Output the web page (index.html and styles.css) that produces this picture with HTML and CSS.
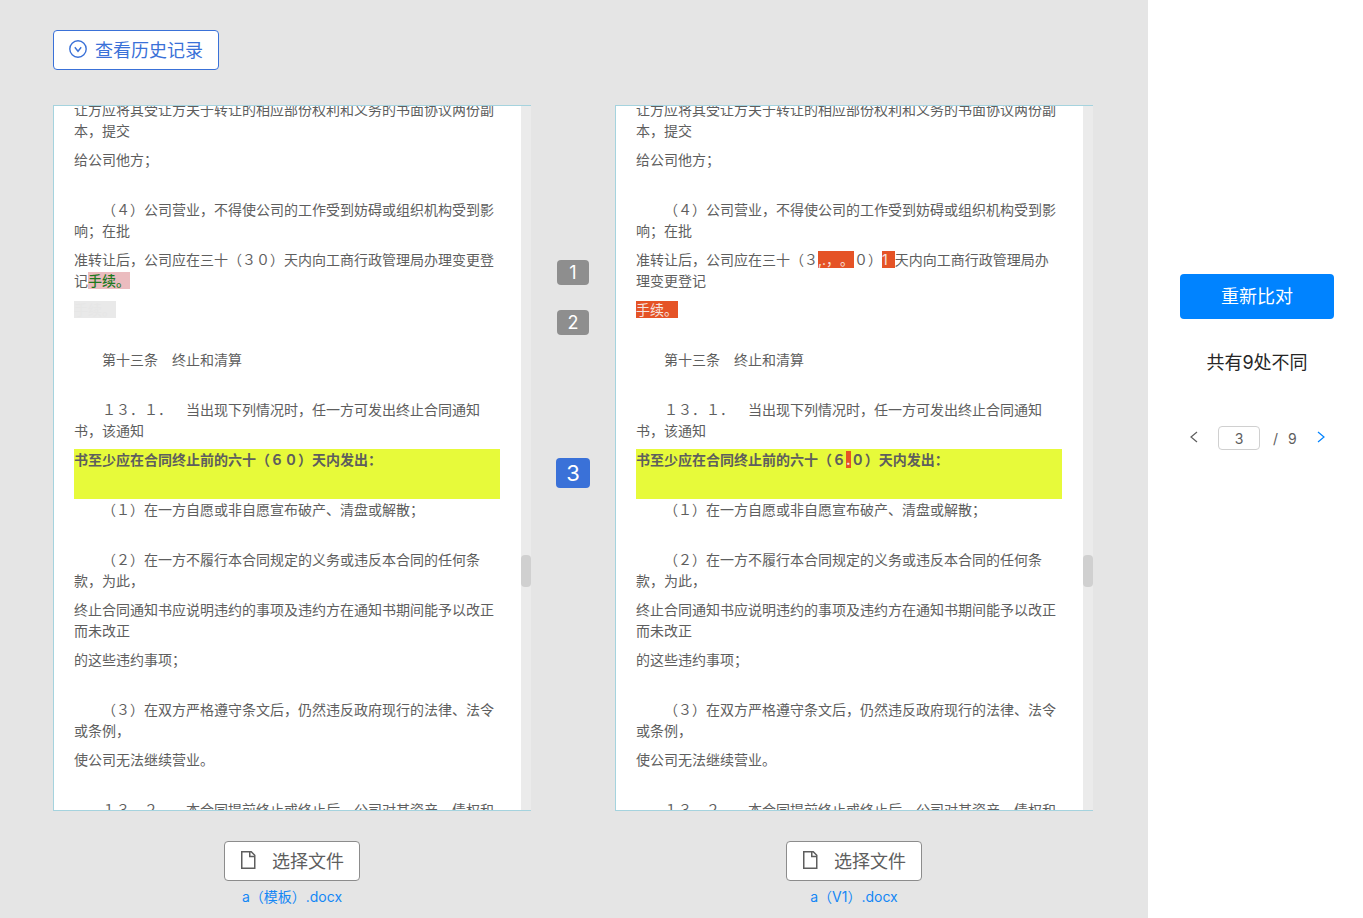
FILE: index.html
```html
<!DOCTYPE html>
<html lang="zh-CN">
<head>
    <meta charset="UTF-8">
    <meta name="viewport" content="width=device-width, initial-scale=1.0">
    <title>合同比对</title>
    <link rel="stylesheet" href="styles.css">
</head>
<body>
    <div class="page">
        <main class="compare">
            <button type="button" class="btn history-btn">
                <svg width="18" height="18" viewBox="0 0 18 18" fill="none" stroke="currentColor" stroke-width="1.4">
                    <circle cx="9" cy="9" r="8.2"/>
                    <path d="M5.8 7.3 9 11.3l3.2-4"/>
                </svg>
                <span>查看历史记录</span>
            </button>

            <div class="panels">
                <section class="panel">
                    <div class="doc">
                        <p>让方应将其受让方关于转让的相应部份权利和义务的书面协议两份副本，提交</p>
                        <p>给公司他方；</p>
                        <p>　　（４）公司营业，不得使公司的工作受到妨碍或组织机构受到影响；在批</p>
                        <p>准转让后，公司应在三十（３０）天内向工商行政管理局办理变更登记<span class="removed">手续。</span></p>
                        <p><span class="blank">手续。</span></p>
                        <p>　　第十三条　终止和清算</p>
                        <p>　　１３．１．　当出现下列情况时，任一方可发出终止合同通知书，该通知</p>
                        <p class="current">书至少应在合同终止前的六十（６０）天内发出：</p>
                        <p>　　（１）在一方自愿或非自愿宣布破产、清盘或解散；</p>
                        <p>　　（２）在一方不履行本合同规定的义务或违反本合同的任何条款，为此，</p>
                        <p>终止合同通知书应说明违约的事项及违约方在通知书期间能予以改正而未改正</p>
                        <p>的这些违约事项；</p>
                        <p>　　（３）在双方严格遵守条文后，仍然违反政府现行的法律、法令或条例，</p>
                        <p>使公司无法继续营业。</p>
                        <p>　　１３．２．　本合同提前终止或终止后，公司对其资产、债权和</p>
                    </div>
                    <div class="track"><div class="thumb"></div></div>
                </section>

                <nav class="markers">
                    <button type="button">1</button>
                    <button type="button">2</button>
                    <button type="button" class="active">3</button>
                </nav>

                <section class="panel">
                    <div class="doc">
                        <p>让方应将其受让方关于转让的相应部份权利和义务的书面协议两份副本，提交</p>
                        <p>给公司他方；</p>
                        <p>　　（４）公司营业，不得使公司的工作受到妨碍或组织机构受到影响；在批</p>
                        <p>准转让后，公司应在三十（３<span class="added">,.，。</span>０）<span class="added added-num">1&nbsp;</span>天内向工商行政管理局办理变更登记</p>
                        <p><span class="added">手续。</span></p>
                        <p>　　第十三条　终止和清算</p>
                        <p>　　１３．１．　当出现下列情况时，任一方可发出终止合同通知书，该通知</p>
                        <p class="current">书至少应在合同终止前的六十（６<span class="added">.</span>０）天内发出：</p>
                        <p>　　（１）在一方自愿或非自愿宣布破产、清盘或解散；</p>
                        <p>　　（２）在一方不履行本合同规定的义务或违反本合同的任何条款，为此，</p>
                        <p>终止合同通知书应说明违约的事项及违约方在通知书期间能予以改正而未改正</p>
                        <p>的这些违约事项；</p>
                        <p>　　（３）在双方严格遵守条文后，仍然违反政府现行的法律、法令或条例，</p>
                        <p>使公司无法继续营业。</p>
                        <p>　　１３．２．　本合同提前终止或终止后，公司对其资产、债权和</p>
                    </div>
                    <div class="track"><div class="thumb"></div></div>
                </section>
            </div>

            <div class="files">
                <div class="file">
                    <button type="button" class="btn file-btn">
                        <svg width="16" height="20" viewBox="0 0 16 20" fill="none" stroke="currentColor" stroke-width="1.5">
                            <path d="M1.75 1.75h9.5l3.5 3.5v13h-13z"/>
                            <path d="M9.75 2v4.5h4.75"/>
                        </svg>
                        <span>选择文件</span>
                    </button>
                    <a href="#">a（模板）.docx</a>
                </div>
                <div class="file">
                    <button type="button" class="btn file-btn">
                        <svg width="16" height="20" viewBox="0 0 16 20" fill="none" stroke="currentColor" stroke-width="1.5">
                            <path d="M1.75 1.75h9.5l3.5 3.5v13h-13z"/>
                            <path d="M9.75 2v4.5h4.75"/>
                        </svg>
                        <span>选择文件</span>
                    </button>
                    <a href="#">a（V1）.docx</a>
                </div>
            </div>
        </main>

        <aside class="side">
            <button type="button" class="again-btn">重新比对</button>
            <p class="total">共有9处不同</p>
            <div class="pager">
                <button type="button" aria-label="上一处">
                    <svg width="8" height="12" viewBox="0 0 8 12" fill="none" stroke="currentColor" stroke-width="1.2"><path d="M7 1 1 6l6 5"/></svg>
                </button>
                <input type="text" value="3" aria-label="当前处">
                <span class="slash">/</span>
                <span>9</span>
                <button type="button" class="next" aria-label="下一处">
                    <svg width="8" height="12" viewBox="0 0 8 12" fill="none" stroke="currentColor" stroke-width="1.2"><path d="m1 1 6 5-6 5"/></svg>
                </button>
            </div>
        </aside>
    </div>
</body>
</html>
```

FILE: styles.css
```css
* {
    box-sizing: border-box;
}

body {
    margin: 0;
    font-family: Inter, "Noto Sans CJK SC", sans-serif;
    font-size: 14px;
    color: #5e5e5e;
    text-spacing-trim: space-all;
}

button, input {
    font-family: inherit;
    color: inherit;
}

button {
    cursor: pointer;
}

p {
    margin: 0;
}

.page {
    display: flex;
    min-height: 100vh;
}

.compare {
    flex: 1;
    padding: 30px 55px 0 53px;
    background: #e5e5e5;
}

.btn {
    display: flex;
    align-items: center;
    height: 40px;
    padding: 0 15px 2px;
    background: #fff;
    border: 1px solid #8c8c8c;
    border-radius: 4px;
    font-size: 18px;
}

.history-btn {
    gap: 8px;
    color: #3a71d8;
    border-color: #3a71d8;
}

/* documents */
.panels {
    display: flex;
    height: calc(100vh - 212px);
    margin-top: 35px;
}

.panel {
    flex: 1;
    display: flex;
    overflow: hidden;
    border: 1px solid #a5d3de;
    border-right: 0;
}

.doc {
    flex: 1;
    padding: 0 21px 0 20px;
    background: #fff;
    line-height: 21px;
}

.doc p {
    min-height: 50px;
    padding-bottom: 8px;
}

/* first paragraph is partly scrolled out */
.doc p:first-child {
    margin-top: -7px;
}

.doc .current {
    background: #e7fa3a;
    font-weight: bold;
}

.removed {
    background: #ebbcbf;
    color: #1f7a1f;
    font-weight: 500;
}

.blank {
    background: #e9e9e9;
    color: #e6e6e6;
}

.added {
    background: #e55326;
    color: #f5e5e0;
}

.added-num {
    padding-right: 3px;
}

.track {
    width: 10px;
    background: #ebebeb;
}

.thumb {
    height: 32px;
    margin-top: 449px;
    background: #d0d0d0;
    border-radius: 4px;
}

/* difference numbers between the documents */
.markers {
    display: flex;
    flex-direction: column;
    align-items: center;
    gap: 25px;
    width: 84px;
    padding-top: 155px;
}

.markers button {
    width: 32px;
    height: 25px;
    padding: 0;
    border: 0;
    border-radius: 4px;
    background: #8e8e8e;
    color: #fff;
    font-size: 18px;
    line-height: 25px;
}

.markers .active {
    width: 34px;
    height: 30px;
    margin-top: 98px;
    background: #3a71d8;
    font-size: 22px;
    line-height: 30px;
}

.files {
    display: flex;
    gap: 84px;
    margin-top: 30px;
}

.file {
    flex: 1;
    display: flex;
    flex-direction: column;
    align-items: center;
    gap: 5px;
}

.file-btn {
    gap: 16px;
}

.file a {
    color: #1487f5;
    line-height: 21px;
    text-decoration: none;
}

/* right column */
.side {
    display: flex;
    flex-direction: column;
    width: 215px;
    padding: 274px 29px 0 32px;
    background: #fff;
}

.again-btn {
    height: 45px;
    padding: 0 0 4px;
    border: 0;
    border-radius: 4px;
    background: #0083ff;
    color: #fff;
    font-size: 18px;
}

.total {
    margin-top: 30px;
    color: #262626;
    font-size: 18px;
    line-height: 27px;
    text-align: center;
}

.pager {
    display: flex;
    align-items: center;
    margin-top: 50px;
    padding: 0 9px 0 10px;
}

.pager button {
    display: flex;
    padding: 0 0 2px;
    border: 0;
    background: none;
}

.pager input {
    width: 42px;
    height: 24px;
    margin-left: 20px;
    padding: 0;
    border: 1px solid #d0d0d0;
    border-radius: 4px;
    font-size: 14px;
    text-align: center;
}

.pager .slash {
    margin: 0 10px 0 13px;
}

.pager .next {
    margin-left: auto;
    color: #0083ff;
}
```
